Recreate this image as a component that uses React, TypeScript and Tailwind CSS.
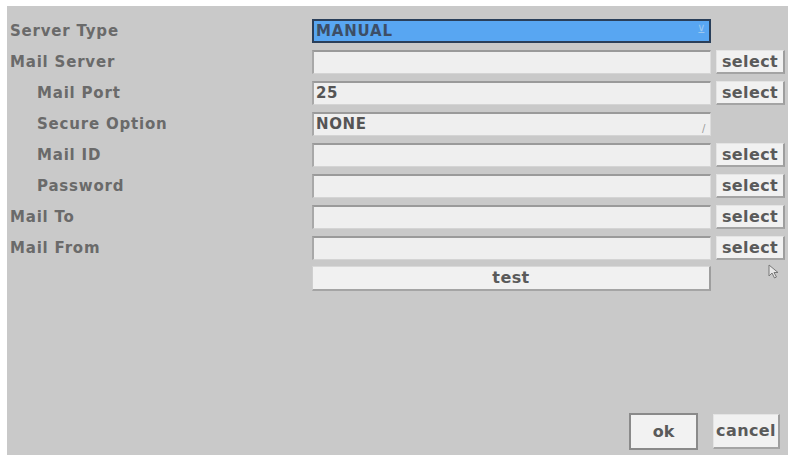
import React from "react";

type Row = { label: string; indent?: boolean; value?: string; kind: "combo" | "text"; select?: boolean; active?: boolean };

const rows: Row[] = [
  { label: "Server Type", kind: "combo", value: "MANUAL", active: true },
  { label: "Mail Server", kind: "text", select: true },
  { label: "Mail Port", indent: true, kind: "text", value: "25", select: true },
  { label: "Secure Option", indent: true, kind: "combo", value: "NONE" },
  { label: "Mail ID", indent: true, kind: "text", select: true },
  { label: "Password", indent: true, kind: "text", select: true },
  { label: "Mail To", kind: "text", select: true },
  { label: "Mail From", kind: "text", select: true },
];

const font = { fontFamily: '"DejaVu Sans", Verdana, sans-serif' };

function Field({ row }: { row: Row }) {
  if (row.active) {
    return (
      <div className="relative flex h-[24px] items-center border-2 border-[#2a3f5a] bg-[#58a6f2] pl-[2px] text-[15px] font-bold tracking-[0.8px] text-[#3d4e66]">
        {row.value}
        <span className="absolute right-[3px] top-[3px] text-[11px] font-normal leading-none text-[#9cc8f0]">⊻</span>
      </div>
    );
  }
  return (
    <div className="relative flex h-[24px] items-center border-t-2 border-l-2 border-r border-b border-t-[#9a9a9a] border-l-[#a8a8a8] border-r-[#dcdcdc] border-b-[#d4d4d4] bg-[#efefef] pl-[2px] text-[15px] font-bold tracking-[0.6px] text-[#555]">
      {row.value}
      {row.kind === "combo" && <span className="absolute bottom-[1px] right-[4px] text-[10px] font-normal leading-none text-[#999]">/</span>}
    </div>
  );
}

function Btn({ children, className = "" }: { children: React.ReactNode; className?: string }) {
  return (
    <div className={`flex items-center justify-center border border-[#e4e4e4] border-r-2 border-b-2 border-r-[#9e9e9e] border-b-[#a4a4a4] bg-[#f1f1f1] text-[16px] font-bold tracking-[0.4px] text-[#5a5a5a] ${className}`}>
      {children}
    </div>
  );
}

export default function App() {
  return (
    <div className="h-[457px] w-[793px] overflow-hidden bg-white pl-[7px] pr-[5px] pt-[6px]" style={font}>
      <div className="relative flex h-[449px] flex-col bg-[#c9c9c9] pt-[13px] pl-[3px]">
        <div className="grid grid-cols-[297px_399px_69px] gap-x-[5px] gap-y-[7px]">
          {rows.map((row) => (
            <React.Fragment key={row.label}>
              <div className={`flex h-[24px] items-center pt-[1px] text-[15px] font-bold tracking-[0.8px] text-[#6a6a6a] ${row.indent ? "pl-[27px]" : ""}`}>{row.label}</div>
              <Field row={row} />
              {row.select ? <Btn className="h-[24px]">select</Btn> : <div />}
            </React.Fragment>
          ))}
          <div />
          <Btn className="-mt-[1px] h-[25px] border-l-[#cfcfcf] border-t-[#d8d8d8]">test</Btn>
          <div className="relative">
            <svg className="absolute left-[52px] top-[-3px]" width="14" height="16" viewBox="0 0 14 16">
              <path d="M1 1 L1 12 L4 9 L6.5 14 L8.5 13 L6 8.5 L10 8.5 Z" fill="#e8e8e8" stroke="#777" strokeWidth="1" strokeLinejoin="round" />
            </svg>
          </div>
        </div>
        <div className="mt-auto mb-[5px] flex justify-end gap-[15px] pr-[8px]">
          <div className="flex h-[37px] w-[69px] items-center justify-center border-2 border-[#8a8a8a] bg-[#f2f2f2] text-[16px] font-bold text-[#5a5a5a]">ok</div>
          <Btn className="h-[35px] w-[67px] mt-[1px]">cancel</Btn>
        </div>
      </div>
    </div>
  );
}
